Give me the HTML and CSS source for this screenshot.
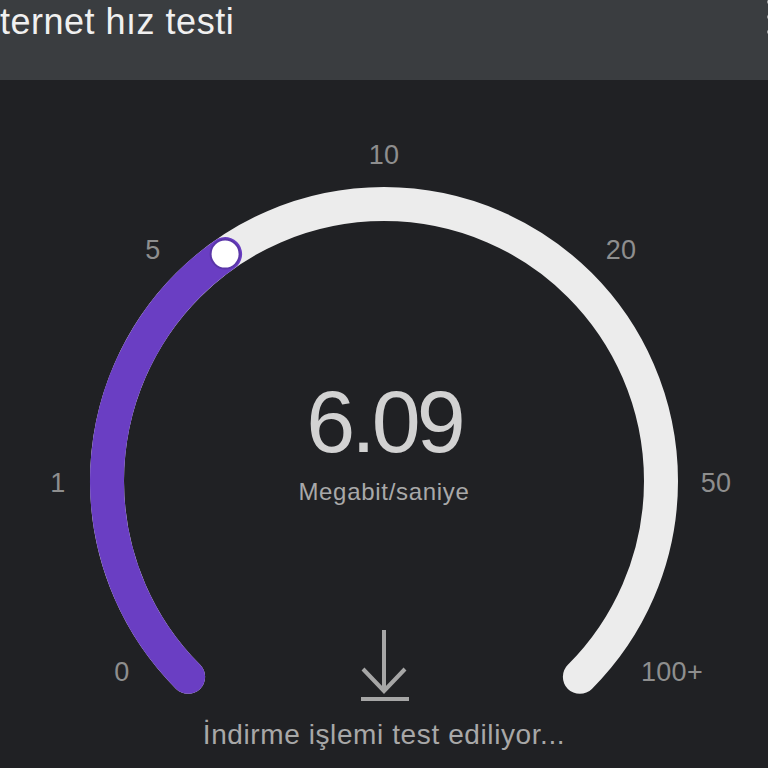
FILE: index.html
```html
<!DOCTYPE html>
<html lang="tr">
<head>
    <meta charset="UTF-8">
    <meta name="viewport" content="width=device-width, initial-scale=1.0">
    <title>İnternet hız testi</title>
    <link rel="stylesheet" href="styles.css">
</head>
<body>
    <header class="topbar">
        <h1 class="title">İnternet hız testi</h1>
        <span class="menu">
            <svg width="8" height="40" viewBox="0 0 8 40">
                <circle cx="4" cy="2" r="2.6" fill="#f0f0f0"/>
                <circle cx="4" cy="17" r="2.6" fill="#f0f0f0"/>
                <circle cx="4" cy="32" r="2.6" fill="#f0f0f0"/>
            </svg>
        </span>
    </header>

    <main class="gauge">
        <!-- dial, drawn in page coordinates (main starts at y=80) -->
        <svg class="dial" width="768" height="688" viewBox="0 80 768 688">
            <path d="M 188.13 676.87 A 277 277 0 1 1 579.87 676.87" fill="none" stroke="#ececec" stroke-width="34" stroke-linecap="round"/>
            <path d="M 188.13 676.87 A 277 277 0 0 1 225.1 254.1" fill="none" stroke="#6a3ec3" stroke-width="34" stroke-linecap="round"/>
            <circle cx="225.1" cy="254.1" r="14.5" fill="#ffffff" stroke="#5a36a8" stroke-width="2"/>

            <g class="ticks">
                <text x="122" y="672">0</text>
                <text x="58" y="483">1</text>
                <text x="153" y="250">5</text>
                <text x="384" y="155">10</text>
                <text x="621" y="250">20</text>
                <text x="716" y="483">50</text>
                <text x="672" y="672">100+</text>
            </g>
        </svg>

        <div class="readout">
            <div class="value">6.09</div>
            <div class="unit">Megabit/saniye</div>
        </div>

        <div class="status">
            <svg class="status-icon" width="52" height="74" viewBox="0 0 52 74">
                <path d="M26 2 V63" stroke="#a6a6a6" stroke-width="4" fill="none"/>
                <path d="M5 41 L26 63 L47 41" stroke="#a6a6a6" stroke-width="4" fill="none"/>
                <path d="M3 71 H51" stroke="#a6a6a6" stroke-width="4" fill="none"/>
            </svg>
            <div class="status-text">İndirme işlemi test ediliyor...</div>
        </div>
    </main>
</body>
</html>
```

FILE: styles.css
```css
body {
    margin: 0;
    background-color: #202124;
    font-family: "Liberation Sans", Arial, sans-serif;
    overflow: hidden;
}
.topbar {
    height: 80px;
    background-color: #3a3d40;
    display: flex;
    align-items: flex-start;
    padding-top: 4px;
    box-sizing: border-box;
    overflow: hidden;
}
.title {
    margin: 0 0 0 -31px;
    font-size: 36px;
    font-weight: normal;
    line-height: 1;
    letter-spacing: 0.5px;
    color: #f0f0f0;
    white-space: nowrap;
}
.menu {
    margin-left: auto;
    margin-right: -6px;
    margin-top: -4px;
}
.gauge {
    position: relative;
    height: 688px;
}
.dial {
    display: block;
}
.ticks text {
    font-family: "Liberation Sans", Arial, sans-serif;
    font-size: 27px;
    letter-spacing: 0.3px;
    fill: #8e8e8e;
    text-anchor: middle;
    dominant-baseline: central;
}
/* readout sits inside the arc */
.readout {
    position: absolute;
    top: 298px;
    left: 0;
    right: 0;
    display: flex;
    flex-direction: column;
    align-items: center;
    gap: 14px;
}
.value {
    font-size: 88px;
    line-height: 1;
    letter-spacing: -4px;
    color: #d2d2d2;
}
.unit {
    font-size: 24px;
    line-height: 1;
    letter-spacing: 0.7px;
    color: #a9a9a9;
}
.status {
    position: absolute;
    top: 548px;
    left: 0;
    right: 0;
    display: flex;
    flex-direction: column;
    align-items: center;
    gap: 19px;
}
.status-icon {
    display: block;
}
.status-text {
    font-size: 28px;
    line-height: 1;
    letter-spacing: 0.6px;
    color: #a8a8a8;
}
```
